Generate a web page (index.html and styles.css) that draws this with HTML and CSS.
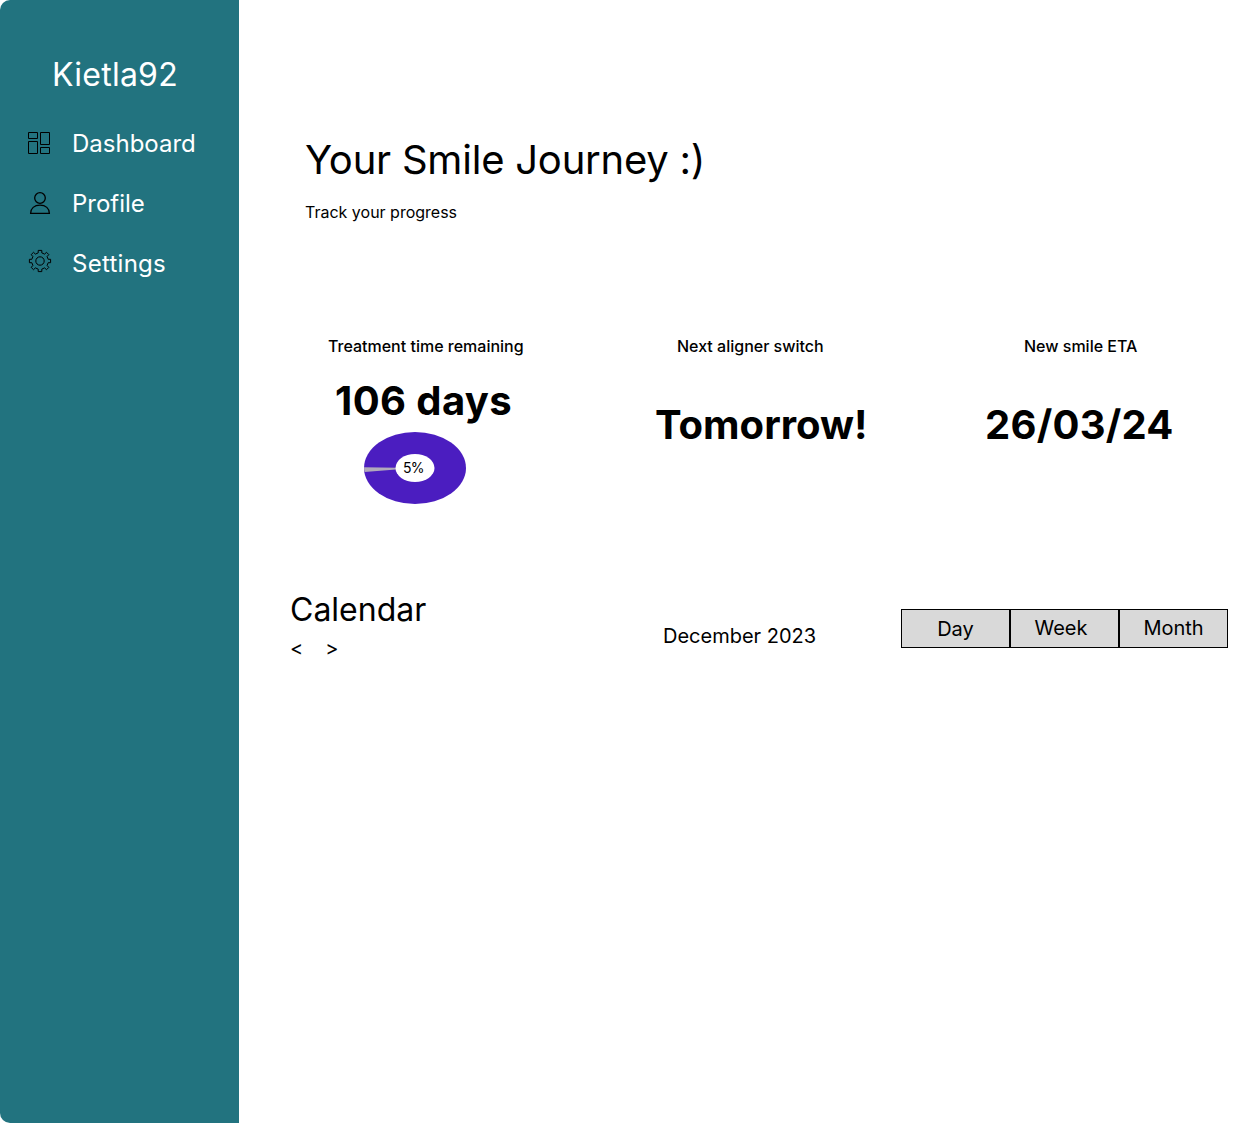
FILE: index.html
```html
<!DOCTYPE html>
<html lang="en">
<head>
<meta charset="utf-8">
<title>Your Smile Journey</title>
<link rel="stylesheet" href="styles.css">
</head>
<body>
<div class="app">
  <aside class="sidebar">
    <div class="username">Kietla92</div>
    <nav class="nav">
      <a class="nav-item">
        <svg class="icon" viewBox="0 0 24 24"><path d="M1.5 1.5h9v6h-9zM13.500 1.500h9v12h-9zM1.500 10.500h9v12h-9zM13.500 16.500h9v6h-9z"/></svg>
        <span>Dashboard</span>
      </a>
      <a class="nav-item">
        <svg class="icon icon-profile" viewBox="0 0 24 24"><circle cx="12" cy="7" r="5.300"/><path d="M2.600 22.400c0-5 3.700-8.300 9.400-8.300s9.400 3.300 9.400 8.300z"/></svg>
        <span>Profile</span>
      </a>
      <a class="nav-item nav-settings">
        <svg class="icon icon-settings" viewBox="0 0 24 24"><circle cx="12" cy="12" r="4.200"/><path d="M10.200 1.400h3.600v2.500l2.800 1.200 1.900-1.800 2.300 2.300-1.700 2 1.100 2.700h2.400v3.400h-2.400l-1.100 2.700 1.700 2-2.300 2.300-1.900-1.800-2.800 1.200v2.500h-3.600v-2.500l-2.800-1.200-1.900 1.800-2.300-2.300 1.700-2-1.100-2.700H1.400v-3.400h2.400l1.100-2.700-1.700-2 2.300-2.300 1.900 1.800 2.800-1.200z"/></svg>
        <span>Settings</span>
      </a>
    </nav>
  </aside>
  <main class="main">
    <header class="heading">
      <h1>Your Smile Journey :)</h1>
      <p>Track your progress</p>
    </header>
    <section class="stats">
      <div class="stat stat-time">
        <h2>Treatment time remaining</h2>
        <strong>106 days</strong>
        <div class="chart">
          <svg viewBox="0 0 102 72"><ellipse class="ring" cx="51" cy="36" rx="51" ry="36"/><path class="slice" d="M51 36L0 35.200Q0 37.800 .6 40z"/><ellipse class="hole" cx="51" cy="36" rx="19.500" ry="14"/></svg>
          <span class="percent">5%</span>
        </div>
      </div>
      <div class="stat stat-next">
        <h2>Next aligner switch</h2>
        <strong>Tomorrow!</strong>
      </div>
      <div class="stat stat-eta">
        <h2>New smile ETA</h2>
        <strong>26/03/24</strong>
      </div>
    </section>
    <section class="calendar">
      <div class="calendar-title">
        <h2>Calendar</h2>
        <div class="arrows"><span>&lt;</span><span>&gt;</span></div>
      </div>
      <div class="month">December 2023</div>
      <div class="views">
        <div class="view view-day">Day</div>
        <div class="view view-week">Week</div>
        <div class="view">Month</div>
      </div>
    </section>
  </main>
</div>
</body>
</html>
```

FILE: styles.css
```css
* { box-sizing: border-box; }
body { margin: 0; background: #fff; color: #000; font-family: Inter, sans-serif; font-weight: 370; }
h1, h2, p { margin: 0; font-weight: inherit; }
.app { display: flex; height: 1123px; overflow: hidden; }
.sidebar { width: 239px; flex: none; padding-top: 55px; background: #22737f; color: #fff; border-radius: 10px 0 0 10px; }
.username { margin-left: 52px; font-size: 32px; line-height: 39px; letter-spacing: .25px; white-space: nowrap; }
.nav { margin-top: 19px; }
.nav-item { display: flex; align-items: center; height: 60px; padding-left: 27px; gap: 21px; font-size: 24px; line-height: 30px; }
.nav-item span { padding-top: 2px; }
.nav-settings { letter-spacing: .27px; }
.icon { width: 24px; height: 24px; fill: none; stroke: #000; stroke-width: 1; }
.icon-profile { margin: 0 -1px 0 1px; stroke-width: 1.3; }
.icon-settings { margin: -4px -1px 0 1px; stroke-linejoin: round; }
.main { flex: 1; min-width: 0; }
.heading { padding: 135px 0 0 66px; }
.heading h1 { font-size: 40px; line-height: 50px; letter-spacing: -.22px; }
.heading p { margin-top: 17px; font-size: 16px; line-height: 20px; }
.stats { display: flex; height: 262px; margin-top: 114px; white-space: nowrap; }
.stat { display: flex; flex-direction: column; align-items: flex-start; }
.stat h2 { font-size: 16px; line-height: 20px; font-weight: 500; }
.stat strong { font-size: 40px; line-height: 50px; font-weight: 700; }
.stat-time { width: 327px; padding-left: 89px; }
.stat-time strong { margin: 20px 0 0 7px; letter-spacing: .4px; }
.stat-next { width: 330px; padding-left: 89px; }
.stat-next h2 { margin-left: 22px; }
.stat-next strong { margin-top: 44px; }
.stat-eta { padding-left: 89px; }
.stat-eta h2 { margin-left: 39px; }
.stat-eta strong { margin-top: 44px; letter-spacing: .25px; }
.chart { display: grid; width: 102px; height: 72px; margin: 6px 0 0 36px; }
.chart > * { grid-area: 1 / 1; }
.chart svg { width: 102px; height: 72px; }
.ring { fill: #4b1dc0; }
.slice { fill: #b1a9bb; }
.hole { fill: #fff; }
.percent { align-self: center; margin-left: 39px; font-size: 14px; line-height: 16px; letter-spacing: -.8px; }
.calendar { display: flex; padding-left: 51px; font-size: 20px; line-height: 24px; white-space: nowrap; }
.calendar-title { width: 373px; margin-top: -8px; }
.calendar-title h2 { font-size: 32px; line-height: 40px; }
.arrows { display: flex; gap: 22px; margin-top: 6px; }
.month { width: 238px; margin-top: 26px; }
.views { display: flex; margin-top: 11px; }
.view { width: 109px; height: 39px; padding-bottom: 1px; border: 1px solid #000; background: #d9d9d9; text-align: center; line-height: 36px; }
.view-day { line-height: 38px; }
.view-week { padding-right: 7px; }
```
